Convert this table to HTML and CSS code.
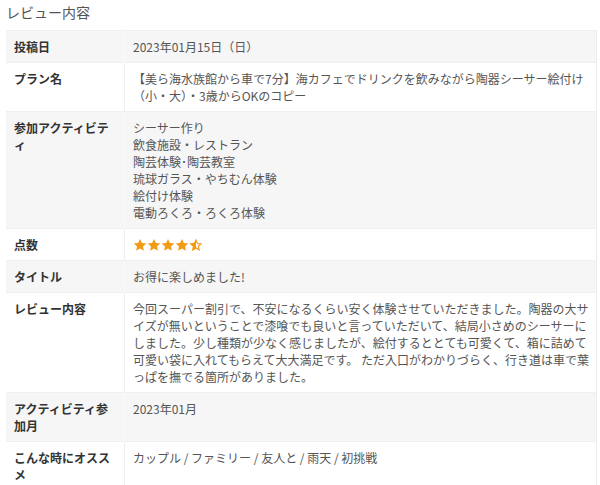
FILE: index.html
```html
<!DOCTYPE html>
<html lang="ja">
<head>
<meta charset="utf-8">
<link rel="stylesheet" href="styles.css">
</head>
<body>
<h2 class="title">レビュー内容</h2>
<table class="review">
  <tr class="alt"><th>投稿日</th><td>2023年01月15日（日）</td></tr>
  <tr><th>プラン名</th><td>【美ら海水族館から車で7分】海カフェでドリンクを飲みながら陶器シーサー絵付け（小・大）・3歳からOKのコピー</td></tr>
  <tr class="alt"><th>参加アクティビティ</th><td>シーサー作り<br>飲食施設・レストラン<br>陶芸体験･陶芸教室<br>琉球ガラス・やちむん体験<br>絵付け体験<br>電動ろくろ・ろくろ体験</td></tr>
  <tr><th>点数</th><td><div class="stars">
    <svg class="star" viewBox="0 0 24 24"><path d="M12 1.5l3.2 7 7.6.8-5.7 5.1 1.6 7.5L12 18l-6.7 3.9 1.6-7.5-5.7-5.1 7.6-.8z"/></svg>
    <svg class="star" viewBox="0 0 24 24"><path d="M12 1.5l3.2 7 7.6.8-5.7 5.1 1.6 7.5L12 18l-6.7 3.9 1.6-7.5-5.7-5.1 7.6-.8z"/></svg>
    <svg class="star" viewBox="0 0 24 24"><path d="M12 1.5l3.2 7 7.6.8-5.7 5.1 1.6 7.5L12 18l-6.7 3.9 1.6-7.5-5.7-5.1 7.6-.8z"/></svg>
    <svg class="star" viewBox="0 0 24 24"><path d="M12 1.5l3.2 7 7.6.8-5.7 5.1 1.6 7.5L12 18l-6.7 3.9 1.6-7.5-5.7-5.1 7.6-.8z"/></svg>
    <svg class="star half" viewBox="0 0 24 24"><path class="fill" d="M12 1.5L8.8 8.5l-7.6.8 5.7 5.1-1.6 7.5L12 18z"/><path class="outline" d="M12 3.8l2.5 5.6 6.1.6-4.6 4.1 1.3 6L12 17l-5.3 3.1 1.3-6-4.6-4.1 6.1-.6z"/></svg>
  </div></td></tr>
  <tr class="alt"><th>タイトル</th><td>お得に楽しめました!</td></tr>
  <tr><th>レビュー内容</th><td>今回スーパー割引で、不安になるくらい安く体験させていただきました。陶器の大サイズが無いということで漆喰でも良いと言っていただいて、結局小さめのシーサーにしました。少し種類が少なく感じましたが、絵付するととても可愛くて、箱に詰めて可愛い袋に入れてもらえて大大満足です。 ただ入口がわかりづらく、行き道は車で葉っぱを撫でる箇所がありました。</td></tr>
  <tr class="alt"><th>アクティビティ参加月</th><td>2023年01月</td></tr>
  <tr><th>こんな時にオススメ</th><td>カップル / ファミリー / 友人と / 雨天 / 初挑戦</td></tr>
</table>
</body>
</html>
```
FILE: styles.css
```css
html, body {
  margin: 0;
  padding: 0;
  background: #fff;
  font-family: "Noto Sans CJK JP", "Noto Sans", sans-serif;
  color: #555;
}
.title {
  margin: 0;
  padding: 2px 6px 0;
  font-size: 14px;
  line-height: 20px;
  font-weight: normal;
  color: #555;
}
.review {
  margin: 8px 0 0 6px;
  width: 591px;
  border-collapse: collapse;
  font-size: 12px;
  line-height: 17px;
  border-right: 1px solid #ececec;
}
.review th,
.review td {
  padding: 7px 4px 7px 8px;
  vertical-align: top;
  text-align: left;
  border-top: 1px solid #f0f0f0;
}
.review th {
  width: 102px;
  padding-right: 8px;
  font-weight: bold;
  color: #333;
  border-right: 1px solid #eeeeee;
}
.review td {
  color: #555;
}
.review tr.alt th,
.review tr.alt td {
  background: #f6f6f6;
}
.review tr.alt th {
  border-right-color: #fbfbfb;
}
.stars {
  display: flex;
  align-items: center;
  height: 17px;
}
.star {
  width: 14px;
  height: 14px;
  fill: #f39a13;
}
.star.half .outline {
  fill: none;
  stroke: #f39a13;
  stroke-width: 2;
}
```
